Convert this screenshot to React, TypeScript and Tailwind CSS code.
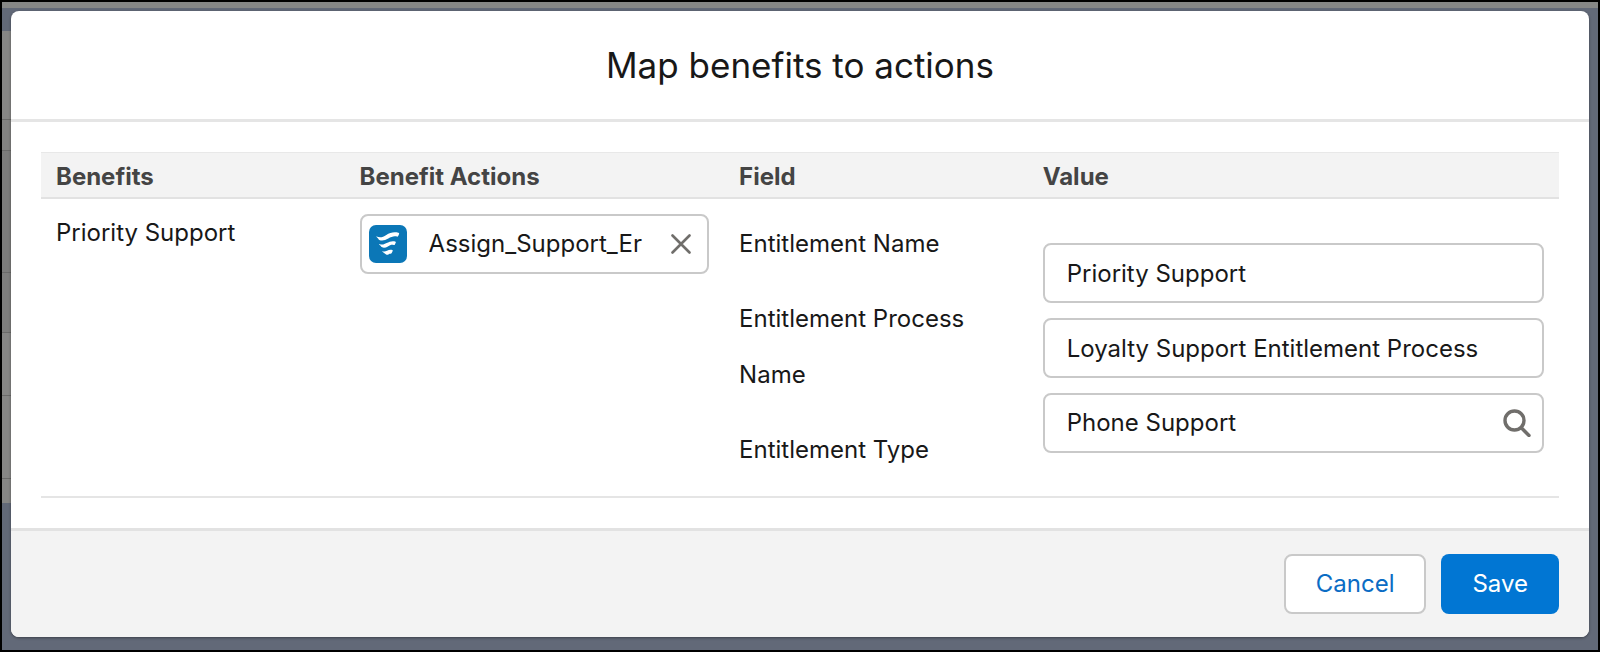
import { useState } from "react";
import clsx from "clsx";

// Rows of the page that peek out from behind the dialog
const backdropRows = [
  "h-[89px] bg-[#868685]",
  "h-[31px] bg-[#828281]",
  "h-[122px] bg-[#7c7c7b]",
  "h-[60px] bg-[#7e7e7d]",
  "h-[63px] bg-[#868685]",
  "h-[83px] bg-[#868685]",
  "h-[24px] bg-[#868685]",
];

const inputStyle =
  "h-[60px] w-full rounded-lg border-2 border-[#c9c9c9] bg-white text-2xl text-[#181818] outline-none";

function FlowIcon() {
  return (
    <svg viewBox="0 0 38 38" className="size-[38px] shrink-0" aria-hidden="true">
      <rect width="38" height="38" rx="7" fill="#0b77b7" />
      <g fill="#fff">
        <path d="M7.600 11.400c3.600 1.600 6.300.6 9.700-1.500 3.700-2.300 7.500-3.300 12.100-2.200.7.200.9.700.7 1.300l-.9 2c-.2.600-.6.700-1.200.6-3.300-.8-5.700.3-8.700 2-3.200 1.800-6.400 2.700-9 1.300-.5-.3-.8-.7-1-1.200l-1.900-1.900c-.2-.3-.1-.5.200-.4z" />
        <path d="M10.400 19c2.700 1.200 4.800.5 7.200-.9 2.700-1.500 5.400-2.400 8.500-1.700.7.200.9.600.7 1.200l-.9 1.800c-.2.500-.6.700-1.200.6-2.200-.5-3.700.2-5.800 1.400-2.100 1.200-4.200 1.700-6.100.7-.5-.3-.8-.7-1-1.200l-1.600-1.500c-.2-.3-.1-.5.200-.4z" />
        <path d="M13.600 26.300c1.600.6 3 .2 4.400-.5 1.600-.8 3.200-1.200 5.200-.8.600.1.700.5.500 1l-1 2.100c-.2.500-.6.600-1.100.6-1.300 0-2 .6-2.700 1-.7.300-1.300.2-1.800-.3l-3.700-2.700c-.2-.3-.1-.5.200-.4z" />
      </g>
    </svg>
  );
}

function CloseIcon() {
  return (
    <svg viewBox="0 0 20 20" className="size-5" aria-hidden="true">
      <path d="M1.500 1.500l17 17M18.500 1.500l-17 17" stroke="#706e6b" strokeWidth="2.600" strokeLinecap="round" />
    </svg>
  );
}

function SearchIcon() {
  return (
    <svg viewBox="0 0 28 28" className="size-7 shrink-0" fill="none" stroke="#706e6b" aria-hidden="true">
      <circle cx="11.500" cy="11.500" r="9.500" strokeWidth="3.400" />
      <path d="M18.500 19l7.500 7.500" strokeWidth="3.400" strokeLinecap="round" />
    </svg>
  );
}

export default function App() {
  const [action, setAction] = useState("Assign_Support_Er");

  return (
    <div className="flex min-h-screen flex-col border-2 border-black bg-[#626978] font-['Inter',sans-serif] text-2xl text-[#181818]">
      <div className="h-[6px] bg-[#868786]" />
      <div className="flex flex-1">
        <div className="w-[9px] shrink-0 pt-[23px]">
          {backdropRows.map((row, i) => (
            <div key={i} className={clsx(row, i < 6 && "border-b border-[#6a6a69]")} />
          ))}
        </div>

        <div
          role="dialog"
          aria-labelledby="dialog-title"
          className="mt-[3px] mb-[13px] flex flex-1 flex-col overflow-hidden rounded-lg bg-white shadow-[0_1px_3px_rgba(0,0,0,0.4)]"
        >
          {/* Header */}
          <header className="border-b-3 border-[#e5e5e5] py-6">
            <h1 id="dialog-title" className="text-center text-[35px] leading-[60px]">
              Map benefits to actions
            </h1>
          </header>

          {/* Body */}
          <div className="flex-1 p-[30px]">
            <table className="w-full table-fixed border-separate border-spacing-0 text-left">
              <thead className="bg-[#f3f3f3] text-[#444444]">
                <tr className="*:h-[47px] *:border-t *:border-b-2 *:border-t-[#e8e8e8] *:border-b-[#e2e2e2] *:px-[15px] *:pt-1 *:leading-10 *:font-bold">
                  <th className="w-[20%]">Benefits</th>
                  <th className="w-[25%]">Benefit Actions</th>
                  <th className="w-[20%]">Field</th>
                  <th className="w-[35%]">Value</th>
                </tr>
              </thead>
              <tbody>
                <tr className="align-top *:border-b-2 *:border-[#e5e5e5] *:px-[15px]">
                  <td className="pt-4 leading-9">Priority Support</td>
                  <td className="pt-[15px]">
                    <div className="flex h-[60px] items-center rounded-lg border-2 border-[#c9c9c9] pr-4 pl-[7px]">
                      <FlowIcon />
                      <input
                        aria-label="Benefit action"
                        value={action}
                        onChange={(e) => setAction(e.target.value)}
                        className="ml-[22px] min-w-0 flex-1 outline-none"
                      />
                      <button type="button" aria-label="Clear" onClick={() => setAction("")} className="ml-4">
                        <CloseIcon />
                      </button>
                    </div>
                  </td>
                  <td className="pt-[17px] pb-[18px]">
                    <div className="flex flex-col gap-[19px] leading-14">
                      <label htmlFor="entitlement-name">Entitlement Name</label>
                      <label htmlFor="entitlement-process">Entitlement Process Name</label>
                      <label htmlFor="entitlement-type">Entitlement Type</label>
                    </div>
                  </td>
                  <td className="pt-11">
                    <div className="flex flex-col gap-[15px]">
                      <input id="entitlement-name" defaultValue="Priority Support" className={clsx(inputStyle, "px-[22px]")} />
                      <input
                        id="entitlement-process"
                        defaultValue="Loyalty Support Entitlement Process"
                        className={clsx(inputStyle, "px-[22px]")}
                      />
                      <div className={clsx(inputStyle, "flex items-center pr-[11px] pl-[22px]")}>
                        <input id="entitlement-type" defaultValue="Phone Support" className="min-w-0 flex-1 outline-none" />
                        <SearchIcon />
                      </div>
                    </div>
                  </td>
                </tr>
              </tbody>
            </table>
          </div>

          {/* Footer */}
          <footer className="flex justify-end gap-[15px] border-t-3 border-[#e2e2e2] bg-[#f3f3f3] px-[30px] py-[23px]">
            <button type="button" className="h-[60px] rounded-lg border-2 border-[#c9c9c9] bg-white px-[30px] text-[#0b6cc4]">
              Cancel
            </button>
            <button type="button" className="h-[60px] rounded-lg bg-[#0176d3] px-[31px] text-white">
              Save
            </button>
          </footer>
        </div>

        <div className="w-[9px] shrink-0" />
      </div>
    </div>
  );
}
